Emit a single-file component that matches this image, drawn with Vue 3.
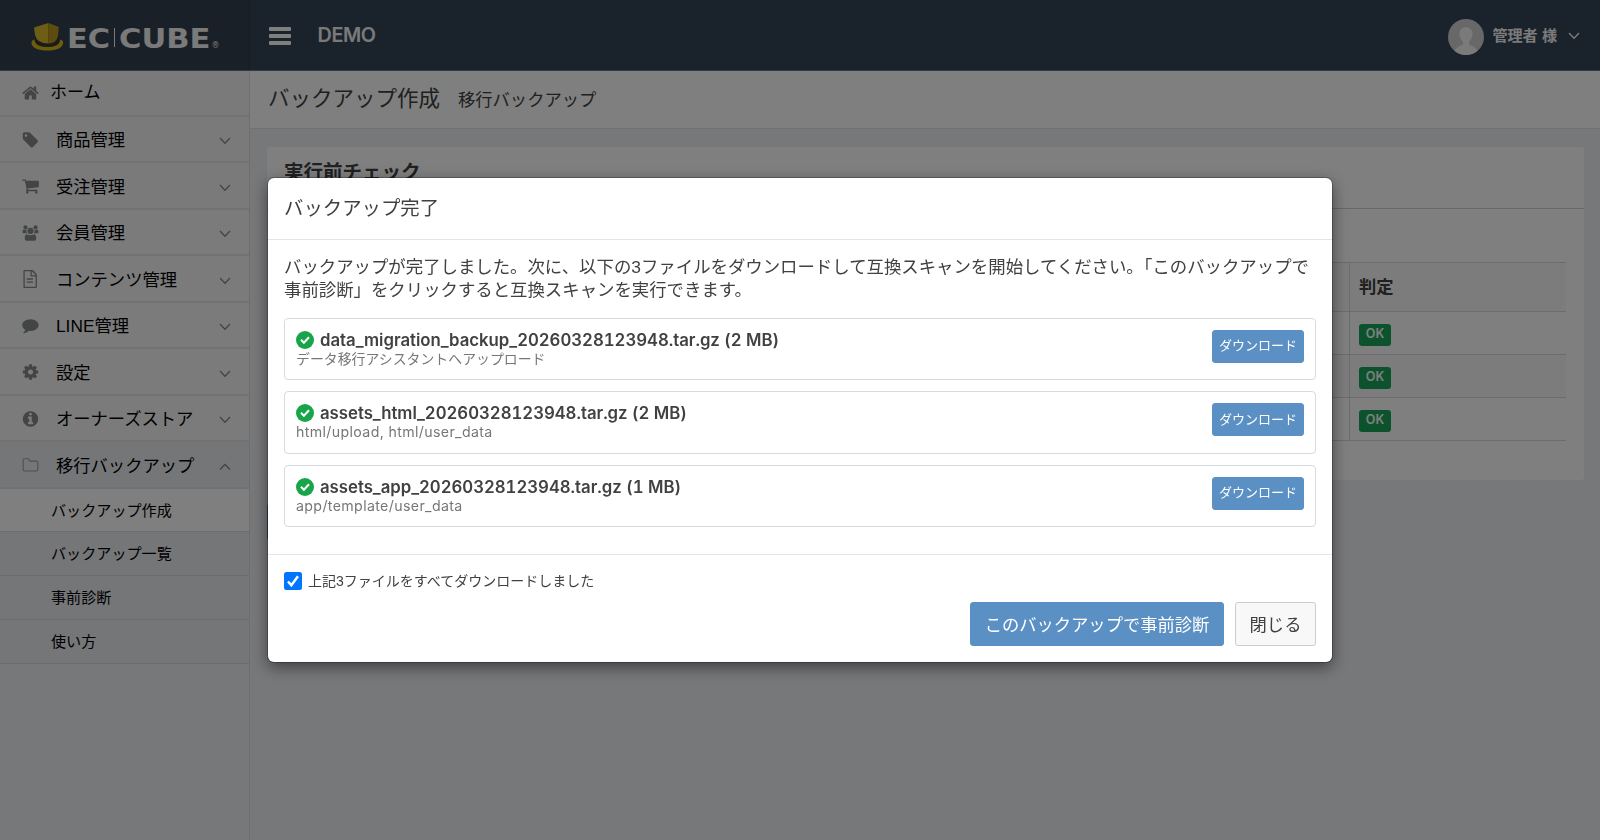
<template>
  <div class="admin">
    <header class="header">
      <div class="brand">
        <svg class="logo" width="190" height="32" viewBox="0 0 190 32">
          <path class="hat-brim" d="M0.500 20.500Q0 17 4 16.500Q6 23 16.500 23Q27 23 28.500 16.500Q33 17 32 20.500Q30.500 27.500 16.500 27.500Q2 27.500 0.500 20.500Z" />
          <path class="hat-band" d="M4 14.500Q6 20 16.500 20.500Q27 20 28.500 14.500L29 18Q27.500 24 16.500 24Q5.600 24 3.500 18Z" />
          <path class="hat-left" d="M3 4.500L17.500 0V20.500Q6 20.500 4 12Z" />
          <path class="hat-right" d="M17.500 0L27.700 4L27 12.500Q25.500 20.500 17.500 20.500Z" />
          <text class="logo-text" x="36" y="24.500" textLength="43" lengthAdjust="spacingAndGlyphs">EC</text>
          <rect class="logo-bar" x="83" y="5" width="1" height="19" />
          <text class="logo-text" x="88" y="24.500" textLength="91.500" lengthAdjust="spacingAndGlyphs">CUBE</text>
          <text class="logo-reg" x="180.500" y="24.500">®</text>
        </svg>
      </div>
      <div class="header-main">
        <div class="burger"><i></i><i></i><i></i></div>
        <div class="shop-name">DEMO</div>
        <div class="user">
          <svg class="avatar" width="36" height="36" viewBox="0 0 36 36">
            <circle cx="18" cy="18" r="18" fill="#d0d0d0" />
            <path fill="#f4f4f4" d="M18 8.200c4.200 0 6.800 2.800 6.600 6.800c-.2 3.700-1.900 6.400-3.600 8v2.200c.4 1.400 5.500 1.300 8.600 6.600A18 18 0 0 1 6.400 31.800c3-5.300 8.200-5.200 8.600-6.600V23c-1.700-1.600-3.400-4.300-3.600-8C11.200 11 13.800 8.200 18 8.200z" />
          </svg>
          <span>管理者 様</span>
          <svg class="user-arrow" width="12" height="8" viewBox="0 0 12 8"><path d="M1 1l5 5.200L11 1" /></svg>
        </div>
      </div>
    </header>

    <div class="body">
      <nav class="side">
        <div v-for="(item, i) in menu" :key="item.label" class="nav-item" :class="{ home: i === 0, open: item.open, tinted: i < 3 }">
          <svg v-if="item.path" class="nav-icon" viewBox="0 0 1792 1792"><path :d="item.path" /></svg>
          <svg v-else-if="item.icon === 'users'" class="nav-icon" viewBox="0 0 18 18">
            <circle cx="4" cy="3.400" r="2.100" />
            <circle cx="14" cy="3.400" r="2.100" />
            <path d="M1 8.600c0-2 .5-3 1.500-3c.8 0 1.500.8 2.500.5c-.2 1.200.1 2.200.6 3.100H2.200Q1 9.300 1 8.600zM17 8.600c0-2-.5-3-1.500-3c-.8 0-1.500.8-2.500.5c.2 1.200-.1 2.200-.6 3.100h3.400q1.200 0 1.200-.6z" />
            <circle cx="9" cy="6.900" r="3.100" />
            <path d="M3.200 14.500c0-3 1-4.200 2.600-4.200c1 1.200 5.400 1.200 6.400 0c1.600 0 2.600 1.200 2.600 4.200q0 2.300-2 2.300H5.200q-2 0-2-2.300z" />
          </svg>
          <svg v-else class="nav-icon line" viewBox="0 0 18 18">
            <path d="M1.700 4.200q0-1.400 1.400-1.400h3.400q1.300 0 1.300 1.300q0 1 1 1h6.100q1.400 0 1.400 1.400v7.100q0 1.400-1.400 1.400H3.100q-1.400 0-1.400-1.400z" />
          </svg>
          <span class="nav-label">{{ item.label }}</span>
          <svg v-if="i > 0" class="nav-arrow" width="12" height="8" viewBox="0 0 12 8">
            <path :d="item.open ? 'M1 6.500l5-5 5 5' : 'M1 1l5 5.200L11 1'" />
          </svg>
        </div>
        <div v-for="(sub, i) in subMenu" :key="sub" class="sub-item" :class="{ active: i === 0 }">{{ sub }}</div>
      </nav>

      <main class="main">
        <div class="page-title">
          <h1>バックアップ作成</h1>
          <span>移行バックアップ</span>
        </div>
        <section class="card">
          <h2>実行前チェック</h2>
          <div class="table">
            <div class="tr th">
              <div class="td"></div>
              <div class="td">判定</div>
            </div>
            <div v-for="n in 3" :key="n" class="tr">
              <div class="td"></div>
              <div class="td"><span class="badge">OK</span></div>
            </div>
          </div>
        </section>
        <div class="run-button"></div>
      </main>
    </div>

    <div class="backdrop">
      <div class="modal">
        <div class="modal-header">バックアップ完了</div>
        <div class="modal-body">
          <p class="lead">バックアップが完了しました。次に、以下の3ファイルをダウンロードして互換スキャンを開始してください。「このバックアップで<br>事前診断」をクリックすると互換スキャンを実行できます。</p>
          <div v-for="file in files" :key="file.name" class="file">
            <div class="file-info">
              <div class="file-name">
                <svg width="18" height="18" viewBox="0 0 18 18">
                  <circle cx="9" cy="9" r="9" fill="#18a54a" />
                  <path d="M5 8.700l2.900 3L13 6.300" fill="none" stroke="#fff" stroke-width="2" />
                </svg>
                <span>{{ file.name }}</span>
              </div>
              <div class="file-note" :class="{ latin: file.latin }">{{ file.note }}</div>
            </div>
            <button class="btn btn-small">ダウンロード</button>
          </div>
        </div>
        <div class="modal-footer">
          <label class="confirm">
            <svg width="18" height="18" viewBox="0 0 18 18">
              <rect width="18" height="18" rx="2.500" fill="#0075ff" />
              <path d="M4 9.500l3.300 3.700L14 4.300" fill="none" stroke="#fff" stroke-width="2.500" />
            </svg>
            <span>上記3ファイルをすべてダウンロードしました</span>
          </label>
          <div class="actions">
            <button class="btn btn-primary">このバックアップで事前診断</button>
            <button class="btn btn-default">閉じる</button>
          </div>
        </div>
      </div>
    </div>
  </div>
</template>

<script setup>
const menu = [
  { label: 'ホーム', path: 'M1472 992v480q0 26-19 45t-45 19h-384v-384h-256v384h-384q-26 0-45-19t-19-45v-480q0-1 .5-3t.5-3l575-474 575 474q1 2 1 6zm223-69l-62 74q-8 9-21 11h-3q-13 0-21-7l-692-577-692 577q-12 8-24 7-13-2-21-11l-62-74q-8-10-7-23.5t11-21.5l719-599q32-26 76-26t76 26l244 204v-195q0-14 9-23t23-9h192q14 0 23 9t9 23v408l219 182q10 8 11 21.5t-7 23.5z' },
  { label: '商品管理', path: 'M576 448q0-53-37.5-90.5t-90.5-37.5-90.5 37.5-37.5 90.5 37.5 90.5 90.5 37.5 90.5-37.5 37.5-90.5zm1067 576q0 53-37 90l-491 492q-39 37-91 37-53 0-90-37l-715-716q-38-37-64.5-101t-26.5-117v-416q0-52 38-90t90-38h416q53 0 117 26.5t102 64.5l715 714q37 39 37 91z' },
  { label: '受注管理', path: 'M704 1536q0 52-38 90t-90 38-90-38-38-90 38-90 90-38 90 38 38 90zm896 0q0 52-38 90t-90 38-90-38-38-90 38-90 90-38 90 38 38 90zm128-1088v512q0 24-16.5 42.5t-40.5 21.5l-1044 122q13 60 13 70 0 16-24 64h920q26 0 45 19t19 45-19 45-45 19h-1024q-26 0-45-19t-19-45q0-11 8-31.5t16-36 21.5-40 15.5-29.5l-177-823h-204q-26 0-45-19t-19-45 19-45 45-19h256q16 0 28.5 6.5t19.5 15.5 13 24.5 8 26 5.5 29.5 4.5 26h1201q26 0 45 19t19 45z' },
  { label: '会員管理', icon: 'users' },
  { label: 'コンテンツ管理', path: 'M1468 380q28 28 48 76t20 88v1152q0 40-28 68t-68 28h-1152q-40 0-68-28t-28-68v-1600q0-40 28-68t68-28h768q40 0 88 20t76 48zm-444-244v376h376q-10-29-22-41l-313-313q-12-12-41-22zm384 1528v-1024h-416q-40 0-68-28t-28-68v-416h-576v1536h1088zm-896-800q0-14 9-23t23-9h576q14 0 23 9t9 23v64q0 14-9 23t-23 9h-576q-14 0-23-9t-9-23v-64zm608 288q14 0 23 9t9 23v64q0 14-9 23t-23 9h-576q-14 0-23-9t-9-23v-64q0-14 9-23t23-9h576z' },
  { label: 'LINE管理', path: 'M1700 810q0 160-110 290t-300 210-410 76q-64 0-132-7-180 178-420 220-45 12-100 20-16 2-28-8t-16-27v-1q-3-4 0-11t2-9 4-8l6-9 6-8 7-8q7-8 29-31t31-35 28-36 30-46 25-54 24-69q-144-81-227-199t-83-254q0-117 65-224t175-185 262-124 319-46q224 0 413 77t299 211 110 290z' },
  { label: '設定', path: 'M1152 896q0-106-75-181t-181-75-181 75-75 181 75 181 181 75 181-75 75-181zm512-109v222q0 12-8 23t-20 13l-185 28q-19 54-39 91 35 50 107 138 10 12 10 25t-9 23q-27 37-99 108t-94 71q-12 0-26-9l-138-108q-44 23-91 38-16 136-29 186-7 28-36 28h-222q-14 0-24.5-8.5t-11.5-21.5l-28-184q-49-16-90-37l-141 107q-10 9-25 9-14 0-25-11-126-114-165-168-7-10-7-23 0-12 8-23 15-21 51-66.5t54-70.5q-27-50-41-99l-183-27q-13-2-21-12.5t-8-23.5v-222q0-12 8-23t19-13l186-28q14-46 39-92-40-57-107-138-10-12-10-24 0-10 9-23 26-36 98.5-107.5t94.5-71.5q13 0 26 10l138 107q44-23 91-38 16-136 29-186 7-28 36-28h222q14 0 24.5 8.5t11.5 21.5l28 184q49 16 90 37l142-107q9-9 24-9 13 0 25 10 129 119 165 170 7 8 7 22 0 12-8 23-15 21-51 66.5t-54 70.5q26 50 41 98l183 28q13 2 21 12.5t8 23.5z' },
  { label: 'オーナーズストア', path: 'M1152 1376v-160q0-14-9-23t-23-9h-96v-512q0-14-9-23t-23-9h-320q-14 0-23 9t-9 23v160q0 14 9 23t23 9h96v320h-96q-14 0-23 9t-9 23v160q0 14 9 23t23 9h448q14 0 23-9t9-23zm-128-896v-160q0-14-9-23t-23-9h-192q-14 0-23 9t-9 23v160q0 14 9 23t23 9h192q14 0 23-9t9-23zm640 416q0 209-103 385.5t-279.5 279.5-385.5 103-385.5-103-279.5-279.5-103-385.5 103-385.5 279.5-279.5 385.5-103 385.5 103 279.5 279.5 103 385.5z' },
  { label: '移行バックアップ', icon: 'folder', open: true },
]

const subMenu = ['バックアップ作成', 'バックアップ一覧', '事前診断', '使い方']

const files = [
  { name: 'data_migration_backup_20260328123948.tar.gz (2 MB)', note: 'データ移行アシスタントへアップロード' },
  { name: 'assets_html_20260328123948.tar.gz (2 MB)', note: 'html/upload, html/user_data', latin: true },
  { name: 'assets_app_20260328123948.tar.gz (1 MB)', note: 'app/template/user_data', latin: true },
]
</script>

<style>
body {
  margin: 0;
  overflow: hidden;
}
</style>

<style scoped>
* {
  box-sizing: border-box;
}

.admin {
  height: 840px;
  display: flex;
  flex-direction: column;
  background: #eff0f4;
  color: #414141;
  font-family: "Liberation Sans", "Noto Sans CJK JP", sans-serif;
  font-size: 17.3px;
}

.header {
  height: 71px;
  flex: none;
  display: flex;
  background: #344458;
  border-bottom: 1px solid #64748a;
}

.brand {
  width: 250px;
  padding: 23px 0 0 31px;
  background: #32404e;
  border-right: 1px solid #283644;
}

.logo {
  display: block;
}

.hat-brim { fill: #d9b818; }
.hat-band { fill: #3a3434; }
.hat-left { fill: #dcbc2a; }
.hat-right { fill: #b8981c; }

.logo-text {
  font: bold 26.5px "DejaVu Sans", sans-serif;
  fill: #f4f4f4;
}

.logo-bar {
  fill: #f4f4f4;
}

.logo-reg {
  font: 8px "DejaVu Sans", sans-serif;
  fill: #f4f4f4;
}

.header-main {
  flex: 1;
  display: flex;
  padding: 0 20px 0 19px;
}

.burger {
  width: 22px;
  padding-top: 27px;
  display: flex;
  flex-direction: column;
  gap: 3px;
}

.burger i {
  height: 4px;
  flex: none;
  border-radius: 1px;
  background: #fff;
}

.shop-name {
  margin-left: 26.5px;
  line-height: 70px;
  font-family: Inter, sans-serif;
  font-size: 19.8px;
  font-weight: 600;
  letter-spacing: -0.4px;
  color: #f4f4f4;
}

.user {
  margin-left: auto;
  display: flex;
  padding-top: 19px;
  color: #f4f4f4;
  font-size: 15.1px;
  font-weight: bold;
  line-height: 34px;
}

.user span {
  margin-left: 8px;
}

.user-arrow {
  margin: 13px 0 0 11px;
  fill: none;
  stroke: #f4f4f4;
  stroke-width: 1.4;
}

.body {
  flex: 1;
  display: flex;
}

.side {
  width: 250px;
  flex: none;
  border-right: 1px solid #dcdde1;
}

.nav-item {
  height: 46.5px;
  display: flex;
  align-items: center;
  padding: 0 18px 0 21px;
  background: #f6f7f7;
  border-bottom: 2px solid #e4e5e7;
  color: #000;
}

.nav-item.tinted {
  background: #f4f5f7;
}

.nav-item.open {
  background: #e9edf0;
}

.nav-item.home {
  height: 45.5px;
}

.nav-icon {
  width: 19px;
  height: 18px;
  flex: none;
  margin-top: 2px;
  fill: #84898d;
}

.home .nav-icon {
  margin-top: 0;
}

.nav-icon.line {
  fill: none;
  stroke: #9b9fa4;
  stroke-width: 1.1;
}

.nav-label {
  margin-left: 16px;
}

.home .nav-label {
  margin-left: 10px;
  padding-bottom: 4px;
  font-size: 17px;
}

.nav-arrow {
  margin: 5px 0 0 auto;
  fill: none;
  stroke: #84898d;
  stroke-width: 1.3;
}

.sub-item {
  height: 43.9px;
  padding-left: 51px;
  border-bottom: 1px solid #d8dadc;
  background: #ebecf0;
  color: #000;
  font-size: 15.1px;
  line-height: 44px;
}

.sub-item.active {
  background: #fff;
}

.main {
  flex: 1;
  min-width: 0;
}

.page-title {
  height: 58px;
  display: flex;
  align-items: baseline;
  padding-left: 18px;
  background: #fff;
  border-bottom: 1px solid #e2e3e6;
  line-height: 56px;
}

.page-title h1 {
  margin: 0;
  font-size: 21.5px;
  font-weight: normal;
}

.page-title span {
  margin-left: 18px;
}

.card {
  height: 333px;
  margin: 18px 16px 0 17px;
  background: #fff;
  border-radius: 3px;
}

.card h2 {
  height: 62px;
  margin: 0;
  padding-left: 17px;
  border-bottom: 1px solid #ccd0d2;
  font-size: 19.5px;
  line-height: 51px;
}

.table {
  margin: 53px 18px 0 17px;
  border-top: 1px solid #d4d8da;
}

.tr {
  display: flex;
  height: 43px;
  border-bottom: 1px solid #d4d8da;
}

.tr:nth-child(odd) {
  background: #f9f9f9;
}

.tr:nth-child(even) {
  background: #fff;
}

.th {
  height: 49px;
  font-weight: bold;
}

.td {
  flex: 1;
  display: flex;
  align-items: center;
  padding-top: 3px;
}

.td:last-child {
  flex: none;
  width: 217px;
  padding-left: 9px;
  border-left: 1px solid #d4d8da;
}

.th .td {
  padding-top: 0;
  padding-bottom: 4px;
}

.badge {
  width: 32px;
  height: 22px;
  border-radius: 3px;
  background: #18a65a;
  color: #fff;
  font-family: Inter, sans-serif;
  font-size: 12.5px;
  font-weight: 600;
  line-height: 20px;
  text-align: center;
}

.run-button {
  width: 200px;
  height: 36px;
  margin: 24px 0 0 17px;
  border-radius: 3px;
  background: #5b90c4;
}

.backdrop {
  position: fixed;
  inset: 0;
  padding-top: 178px;
  background: rgba(0, 0, 0, 0.5);
}

.modal {
  width: 1064px;
  height: 484px;
  margin: 0 auto;
  border-radius: 6px;
  background: #fff;
  box-shadow: 0 0 0 1px rgba(0, 0, 0, 0.25), 0 5px 16px rgba(0, 0, 0, 0.5);
}

.modal-header {
  height: 62px;
  padding-left: 16px;
  border-bottom: 1px solid #e5e5e5;
  font-size: 19.4px;
  line-height: 61px;
}

.modal-body {
  height: 315px;
  padding: 16px 16px 0;
  border-bottom: 1px solid #e5e5e5;
}

.lead {
  margin: 0 0 16px;
  font-size: 17.4px;
  line-height: 23px;
  white-space: nowrap;
}

.file {
  height: 62.5px;
  display: flex;
  justify-content: space-between;
  margin-bottom: 11px;
  padding: 11px;
  border: 1px solid #d5dbe3;
  border-radius: 4px;
}

.file:first-of-type {
  margin-top: -0.5px;
}

.file-name {
  display: flex;
  align-items: center;
  height: 20px;
  font-family: Inter, "Noto Sans CJK JP", sans-serif;
  font-size: 16.8px;
  font-weight: 600;
  font-variant-numeric: tabular-nums;
  letter-spacing: -0.03px;
}

.file-name span {
  margin-left: 6px;
}

.file-note {
  font-family: Inter, "Noto Sans CJK JP", sans-serif;
  font-size: 13.9px;
  line-height: 18px;
  color: #777;
}

.file-note.latin {
  font-size: 14.2px;
  letter-spacing: 0.35px;
}

.btn {
  height: 44px;
  padding: 0 0 2px;
  border: 1px solid #5b90c4;
  border-radius: 3px;
  background: #5b90c4;
  color: #fff;
  font-family: inherit;
  font-size: 17.3px;
}

.btn-primary {
  width: 254px;
}

.btn-small {
  width: 92px;
  height: 33px;
  padding: 0 0 3px;
  font-size: 13px;
}

.btn-default {
  width: 81px;
  border-color: #ccc;
  background: #f8f8f8;
  color: #414141;
}

.modal-footer {
  padding: 17px 16px 0;
}

.confirm {
  display: flex;
  align-items: center;
  height: 18px;
  font-size: 14px;
}

.confirm span {
  margin-left: 6px;
  padding-bottom: 3px;
}

.actions {
  display: flex;
  justify-content: flex-end;
  gap: 11px;
  margin-top: 12px;
}
</style>
